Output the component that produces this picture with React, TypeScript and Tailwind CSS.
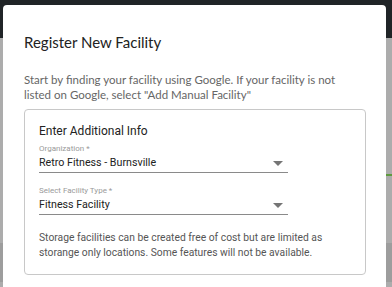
import React from 'react';

const SelectField: React.FC<{ label: string; value: string }> = ({ label, value }) => {
    return (
        <div className="w-[249px]">
            <p className="text-[8px] leading-[10px] text-[#9a9a9a]">{label}</p>
            <div className="flex items-center justify-between h-[19px] border-b border-[#8a8a8a] pr-[5px]">
                <span className="text-[10.7px] text-[#222]">{value}</span>
                <svg width="10" height="5" viewBox="0 0 10 5" className="mt-[1px]">
                    <path d="M0 0 L10 0 L5 5 Z" fill="#757575" />
                </svg>
            </div>
        </div>
    );
};

const App: React.FC = () => {
    return (
        <div className="relative w-[392px] h-[287px] overflow-hidden bg-[#acacac] font-['Roboto',sans-serif]">
            {/* page behind the overlay */}
            <div className="h-[38px] bg-[#202427]" />
            <div className="h-[205px]" />
            <div className="h-[39px] bg-[#9d9d9d]" />
            <div className="absolute right-0 top-[174px] w-[6px] h-[2px] bg-[#5f9a3f]" />

            {/* modal */}
            <div className="absolute left-[3px] top-[5px] w-[383px] h-[290px] bg-white rounded-t-[4px] px-[21px] pt-[27px]">
                <h2 className="text-[15px] leading-[20px] text-[#222] font-['Lato',sans-serif]">Register New Facility</h2>
                <p className="mt-[20px] text-[11.5px] leading-[15px] text-[#666] font-['Lato',sans-serif]">
                    Start by finding your facility using Google. If your facility is not listed on Google, select "Add Manual Facility"
                </p>
                <div className="mt-[7px] w-[342px] border border-[#c8c8c8] rounded-[4px] px-[14px] pt-[12px] pb-[14px]">
                    <h3 className="text-[12px] leading-[18px] text-[#222]">Enter Additional Info</h3>
                    <div className="mt-[4px] flex flex-col gap-[13px]">
                        <SelectField label="Organization *" value="Retro Fitness - Burnsville" />
                        <SelectField label="Select Facility Type *" value="Fitness Facility" />
                    </div>
                    <p className="mt-[15px] text-[10.3px] leading-[15px] text-[#555]">
                        Storage facilities can be created free of cost but are limited as storange only locations. Some features will not be available.
                    </p>
                </div>
            </div>
        </div>
    );
};

export default App;
